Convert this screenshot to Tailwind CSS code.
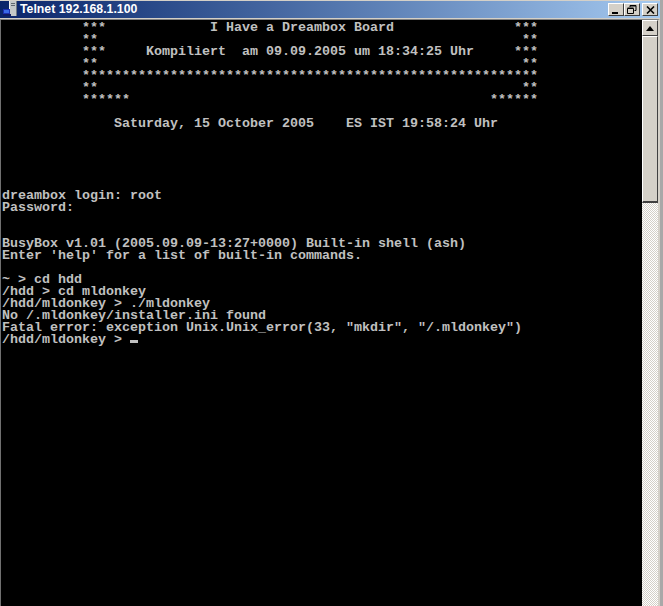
<!DOCTYPE html>
<html lang="de">
<head>
  <meta charset="UTF-8">
  <title>Telnet 192.168.1.100</title>
  <script src="https://cdn.jsdelivr.net/npm/@tailwindcss/browser@4"></script>
</head>
<body class="bg-[#d4d0c8] overflow-hidden">
  <div class="w-[663px] h-[606px] flex flex-col border-r-[3px] border-r-[#a8a8a8]">

    <!-- Titelleiste -->
    <div class="h-[17px] mt-px flex items-center bg-gradient-to-r from-[#0a246a] to-[#a6caf0] shrink-0">
      <svg class="w-[18px] h-[17px] ml-[2px] shrink-0" viewBox="0 0 18 17">
        <rect x="7" y="0" width="8" height="15" fill="#c4c8c8"/>
        <rect x="7" y="0" width="1" height="15" fill="#f0f0f0"/>
        <rect x="14" y="0" width="1" height="15" fill="#707880"/>
        <rect x="9" y="2" width="4" height="1" fill="#606870"/>
        <rect x="9" y="4" width="4" height="1" fill="#606870"/>
        <rect x="1" y="8" width="7" height="5" fill="#1c2fb0"/>
        <rect x="2" y="9" width="5" height="3" fill="#3a6ae8"/>
        <rect x="1" y="13" width="8" height="2" fill="#101c60"/>
      </svg>
      <span class="text-white text-[12.3px] font-bold font-['Liberation_Sans',sans-serif] whitespace-pre">Telnet 192.168.1.100</span>
      <div class="ml-auto flex mr-[2px]">
        <button class="w-[16px] h-[13px] bg-[#d4d0c8] border border-t-white border-l-white border-r-[#404040] border-b-[#404040] flex items-end justify-center pb-[1px] pr-[3px]">
          <span class="block w-[6px] h-[2px] bg-black"></span>
        </button>
        <button class="w-[16px] h-[13px] bg-[#d4d0c8] border border-t-white border-l-white border-r-[#404040] border-b-[#404040] flex items-center justify-center">
          <svg class="w-[10px] h-[9px]" viewBox="0 0 10 9" fill="none" stroke="#000"><path d="M3 2V.5h6v5H7.5M.5 3.5h6v5h-6zM.5 3h6M3 1h6"/></svg>
        </button>
        <button class="ml-[2px] w-[16px] h-[13px] bg-[#d4d0c8] border border-t-white border-l-white border-r-[#404040] border-b-[#404040] flex items-center justify-center">
          <svg class="w-[9px] h-[8px]" viewBox="0 0 9 8" fill="none" stroke="#000" stroke-width="1.6"><path d="M1 .5l7 7M8 .5l-7 7"/></svg>
        </button>
      </div>
    </div>

    <div class="flex-1 flex min-h-0 mt-px border-t border-t-[#808080] border-r-2 border-r-[#d4d0c8]">
      <!-- Konsole -->
      <pre class="flex-1 bg-black text-[#c0c0c0] pl-[1px] pt-[2px] border-l border-l-[#707070] font-['Liberation_Mono',monospace] text-[13.33px] leading-[12px] font-bold overflow-hidden">          ***             I Have a Dreambox Board               ***
          **                                                     **
          ***     Kompiliert  am 09.09.2005 um 18:34:25 Uhr     ***
          **                                                     **
          *********************************************************
          **                                                     **
          ******                                             ******

              Saturday, 15 October 2005    ES IST 19:58:24 Uhr





dreambox login: root
Password:


BusyBox v1.01 (2005.09.09-13:27+0000) Built-in shell (ash)
Enter 'help' for a list of built-in commands.

~ &gt; cd hdd
/hdd &gt; cd mldonkey
/hdd/mldonkey &gt; ./mldonkey
No /.mldonkey/installer.ini found
Fatal error: exception Unix.Unix_error(33, "mkdir", "/.mldonkey")
/hdd/mldonkey &gt; <span class="inline-block w-[8px] h-[3px] bg-[#c0c0c0] align-baseline"></span></pre>

      <!-- Scrollbar -->
      <div class="w-[16px] shrink-0 flex flex-col bg-[conic-gradient(#ffffff_25%,#d4d0c8_0_50%,#ffffff_0_75%,#d4d0c8_0)] bg-[length:2px_2px]">
        <button class="h-[16px] w-[16px] bg-[#d4d0c8] border border-t-white border-l-white border-r-[#404040] border-b-[#404040] flex items-center justify-center">
          <svg class="w-[8px] h-[5px]" viewBox="0 0 8 5"><path d="M4 0l4 5H0z" fill="#000"/></svg>
        </button>
        <div class="h-[167px] w-[16px] bg-[#d4d0c8] border border-t-white border-l-white border-r-[#404040] border-b-2 border-b-[#404040]"></div>
      </div>
    </div>
  </div>
</body>
</html>
